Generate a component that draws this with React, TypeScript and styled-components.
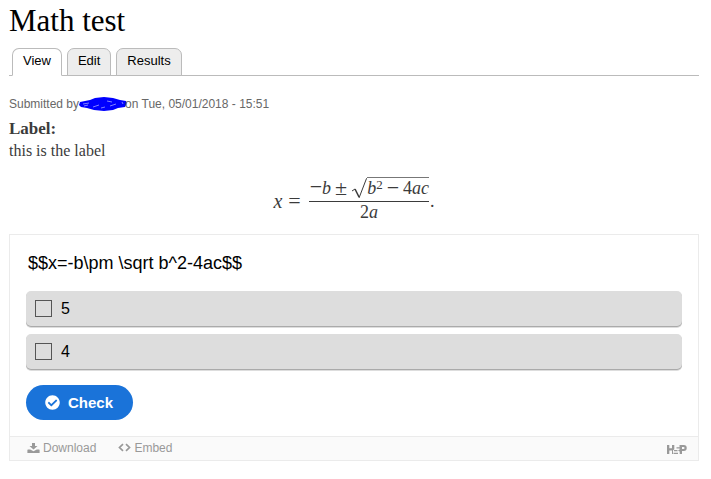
import React from "react";
import styled, { createGlobalStyle, css } from "styled-components";
import { FaCheckCircle } from "react-icons/fa";

const Global = createGlobalStyle`
  * { box-sizing: border-box; }
  body {
    margin: 0;
    background: #fff;
    color: #3b3b3b;
    font-family: "Liberation Serif", serif;
  }
`;

const sans = css`font-family: "Liberation Sans", Arial, sans-serif;`;

const Page = styled.main`
  display: flex;
  flex-direction: column;
  padding: 5px 12px 16px 9px;
`;

const Title = styled.h1`
  margin: 0 0 11px;
  font-size: 31px;
  line-height: 32px;
  font-weight: 400;
  color: #000;
`;

const Tabs = styled.nav`
  display: flex;
  gap: 5px;
  padding: 0 3px;
  border-bottom: 1px solid #bbb;
`;

const Tab = styled.a<{ $active?: boolean }>`
  ${sans}
  height: 28px;
  margin-bottom: -1px;
  padding: 0 10px;
  border: 1px solid #bbb;
  border-bottom-color: ${(p) => (p.$active ? "#fff" : "#bbb")};
  border-radius: 7px 7px 0 0;
  background: ${(p) => (p.$active ? "#fff" : "#ededed")};
  color: #000;
  font-size: 13px;
  line-height: 24px;
  text-decoration: none;
`;

const Submitted = styled.p`
  ${sans}
  display: flex;
  align-items: center;
  margin: 20px 0 6px;
  color: #686868;
  font-size: 12px;
  line-height: 16px;
  white-space: nowrap;
`;

const Scribble = styled.svg`
  display: block;
  width: 48px;
  height: 14px;
  margin-right: -2px;
`;

const Field = styled.section`
  font-size: 16px;
  line-height: 22px;
  color: #3b3b3b;
`;

const FieldLabel = styled.h2`
  margin: 0;
  font-size: 17px;
  line-height: 22px;
`;

const FieldText = styled.p`
  margin: 0;
`;

const Formula = styled.div`
  display: flex;
  justify-content: center;
  align-items: center;
  margin: 15px 0 10px;
  font-size: 18px;
  line-height: 20px;
  white-space: nowrap;
`;

const Variable = styled.i`
  font-size: 20px;
`;

const Operator = styled.span`
  font-size: 22px;
`;

const Equals = styled(Operator)`
  margin: 0 8px 0 6px;
`;

const Stop = styled.span`
  margin-left: 1px;
`;

const Fraction = styled.div`
  display: flex;
  flex-direction: column;
  align-items: center;
`;

const Numerator = styled.div`
  display: flex;
  align-items: flex-end;
  gap: 4px;
  height: 25px;
  padding: 0 0 3px 1px;
  border-bottom: 1px solid #3b3b3b;
`;

const Denominator = styled.div`
  height: 22px;
  line-height: 21px;
`;

const Root = styled.span`
  display: flex;
  align-items: flex-end;
`;

const RootSign = styled.svg`
  display: block;
  width: 16px;
  height: 22px;
  margin-bottom: -1px;
`;

const Radicand = styled.span`
  display: flex;
  gap: 4px;
  height: 21px;
  border-top: 1px solid #777;
`;

const Power = styled.sup`
  font-size: 13px;
  line-height: 0;
  vertical-align: 5px;
`;

const Quiz = styled.section`
  ${sans}
  border: 1px solid #ebebeb;
  background: #fff;
  color: #000;
`;

const QuizBody = styled.form`
  display: flex;
  flex-direction: column;
  align-items: stretch;
  padding: 16px;
`;

const Question = styled.p`
  margin: 0 2px 16px;
  font-size: 18px;
  line-height: 24px;
`;

const Options = styled.div`
  display: flex;
  flex-direction: column;
  gap: 8px;
  margin-bottom: 16px;
`;

const Option = styled.label`
  display: flex;
  align-items: center;
  gap: 9px;
  height: 35px;
  padding: 0 9px;
  border-radius: 5px;
  background: #ddd;
  box-shadow: 0 1px 0 #aaa, 0 2px 0 #ddd;
  font-size: 16px;
`;

const Checkbox = styled.input`
  appearance: none;
  width: 17px;
  height: 17px;
  margin: 0;
  border: 1px solid #555;
  &:checked { background: #1a73d9; }
`;

const CheckButton = styled.button`
  ${sans}
  display: flex;
  align-items: center;
  align-self: flex-start;
  gap: 8px;
  height: 35px;
  padding: 0 20px 0 19px;
  border: 0;
  border-radius: 18px;
  background: #1a73d9;
  color: #fff;
  font-size: 15px;
  font-weight: 700;
  line-height: 35px;
  svg { width: 15px; height: 15px; }
`;

const QuizFooter = styled.footer`
  display: flex;
  align-items: center;
  gap: 22px;
  height: 24px;
  padding: 0 11px 0 17px;
  border-top: 1px solid #ebebeb;
  background: #fafafa;
`;

const Action = styled.button`
  ${sans}
  display: flex;
  align-items: center;
  gap: 3px;
  padding: 0 0 2px;
  border: 0;
  background: none;
  color: #999;
  font-size: 12px;
  line-height: 20px;
  svg { display: block; }
`;

const Brand = styled.a`
  margin: 2px 0 0 auto;
  svg { display: block; }
`;

function ScribbleMark() {
  return (
    <Scribble viewBox="0 0 48 14" aria-hidden="true">
      <path
        d="M1 5 6 4l5-1 5-2 9-1 9 1 7 2 6 1 1 2-2 4-7 1-5 2-9 1-10-1-7-2-6-1-2-2Z"
        fill="#0000ff"
      />
      <path
        d="M4 7l6-1M5 9l4-1M14 10l6-2M22 11l4-1M28 4l5 1M31 9l6-2M43 5l1 2"
        fill="none"
        stroke="#8080ff"
        strokeWidth="1"
      />
    </Scribble>
  );
}

function QuadraticFormula() {
  return (
    <Formula>
      <Variable>x</Variable>
      <Equals>=</Equals>
      <Fraction>
        <Numerator>
          <span><Operator>−</Operator><i>b</i></span>
          <Operator>±</Operator>
          <Root>
            <RootSign viewBox="0 0 16 22" aria-hidden="true">
              <path d="M1 14 4 12" fill="none" stroke="#3b3b3b" />
              <path d="M4 12 8 20" fill="none" stroke="#3b3b3b" strokeWidth="1.500" />
              <path d="M8 21 15.5 1.500H16" fill="none" stroke="#3b3b3b" />
            </RootSign>
            <Radicand>
              <span><i>b</i><Power>2</Power></span>
              <Operator>−</Operator>
              <span>4<i>ac</i></span>
            </Radicand>
          </Root>
        </Numerator>
        <Denominator>2<i>a</i></Denominator>
      </Fraction>
      <Stop>.</Stop>
    </Formula>
  );
}

function DownloadIcon() {
  return (
    <svg width="13" height="11" viewBox="0 0 13 11" fill="#999" aria-hidden="true">
      <path d="M5 1h3v3h2.500L6.500 7.500 2.500 4H5Z" />
      <path d="M1 7.500h2.200l3.300 1.800 3.300-1.800H12a.6.6 0 0 1 .6.6V11H.4V8.100A.6.6 0 0 1 1 7.500Z" />
    </svg>
  );
}

function EmbedIcon() {
  return (
    <svg width="13" height="9" viewBox="0 0 13 9" fill="none" stroke="#999" strokeWidth="1.700" aria-hidden="true">
      <path d="M5 1.200 1.500 4.500 5 7.800M8 1.200l3.500 3.300L8 7.800" />
    </svg>
  );
}

function BrandLogo() {
  return (
    <svg width="20" height="9" viewBox="0 0 20 9" fill="#999" aria-hidden="true">
      <path d="M0 0h2.300v3.300h2.700V0h2.300v4.200L6 5.500V9H5V5.500H2.300V9H0Z" />
      <path d="M7 5h3.500v1.300H7ZM9.500 2.200h4v1.200h-4ZM6.500 7.800H11V9H6.500Z" />
      <path
        fillRule="evenodd"
        d="M12.500 0h4.300a2.900 2.900 0 0 1 0 5.900H15V9h-2.300V6.500L11 5.500l1.700-1Zm2.500 1.900v2.100h1.500a1.050 1.050 0 0 0 0-2.100Z"
      />
    </svg>
  );
}

const tabs = ["View", "Edit", "Results"];
const answers = ["5", "4"];

export default function App() {
  return (
    <>
      <Global />
      <Page>
        <Title>Math test</Title>
        <Tabs>
          {tabs.map((tab, i) => (
            <Tab key={tab} href="#" $active={i === 0}>{tab}</Tab>
          ))}
        </Tabs>
        <Submitted>
          <span>Submitted by</span>
          <ScribbleMark />
          <span>on Tue, 05/01/2018 - 15:51</span>
        </Submitted>
        <Field>
          <FieldLabel>Label:</FieldLabel>
          <FieldText>this is the label</FieldText>
        </Field>
        <QuadraticFormula />
        <Quiz>
          <QuizBody onSubmit={(e) => e.preventDefault()}>
            <Question>$$x=-b\pm \sqrt b^2-4ac$$</Question>
            <Options>
              {answers.map((answer) => (
                <Option key={answer}>
                  <Checkbox type="checkbox" name="answer" value={answer} />
                  {answer}
                </Option>
              ))}
            </Options>
            <CheckButton type="submit"><FaCheckCircle />Check</CheckButton>
          </QuizBody>
          <QuizFooter>
            <Action type="button"><DownloadIcon />Download</Action>
            <Action type="button"><EmbedIcon />Embed</Action>
            <Brand href="#" aria-label="H5P"><BrandLogo /></Brand>
          </QuizFooter>
        </Quiz>
      </Page>
    </>
  );
}
